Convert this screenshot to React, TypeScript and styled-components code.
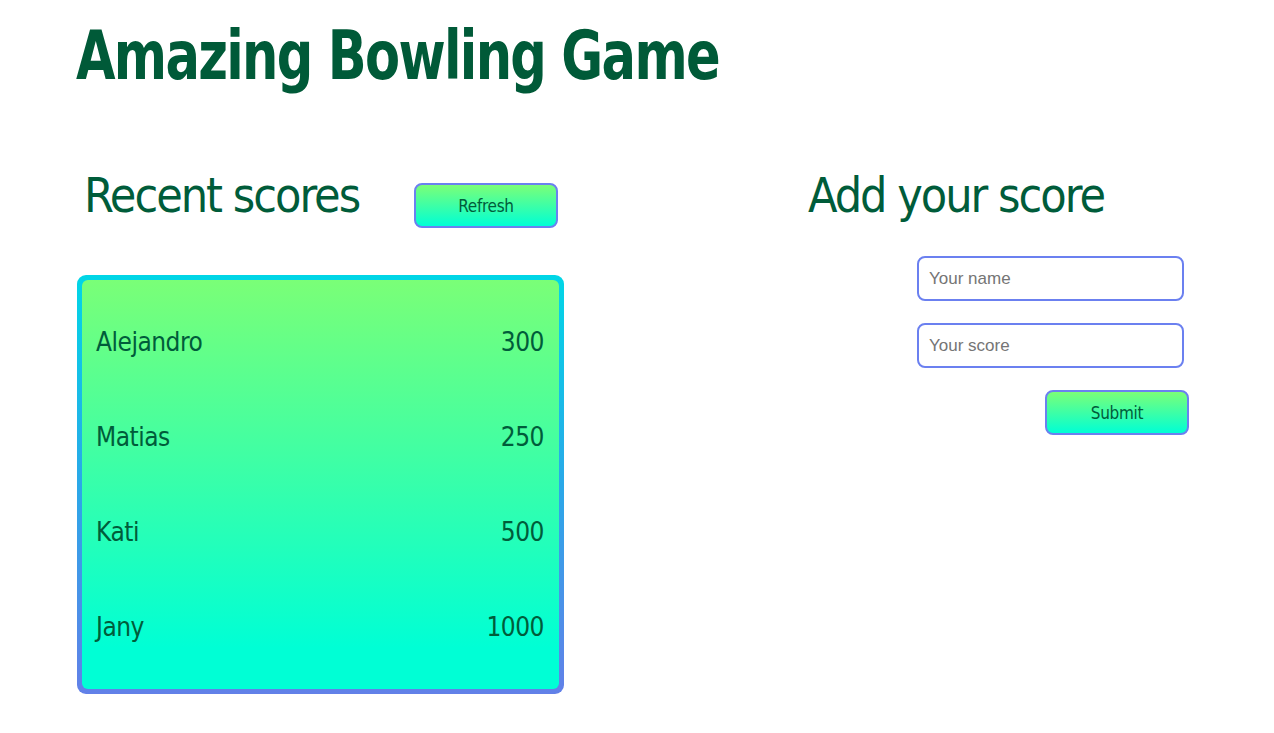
import React from "react";
import styled, { createGlobalStyle } from "styled-components";

const Global = createGlobalStyle`
  html, body { margin: 0; padding: 0; background: #ffffff; }
  body { font-family: "Liberation Sans", Arial, sans-serif; color: #005c3a; }
  * { box-sizing: border-box; }
`;

const Page = styled.div`
  display: flex;
  flex-direction: column;
  width: 1274px;
`;

const Title = styled.h1`
  margin: 22px 0 0 76px;
  font-family: "DejaVu Sans Condensed", "Liberation Sans", sans-serif;
  font-weight: 700;
  font-size: 68px;
  line-height: 1;
  letter-spacing: -2px;
  color: #005a38;
  transform: scaleX(0.835);
  transform-origin: left center;
  white-space: nowrap;
`;

const Main = styled.main`
  display: flex;
  justify-content: space-between;
  align-items: flex-start;
  padding: 0 85px 0 77px;
  margin-top: 81px;
`;

const LeftPanel = styled.section`
  display: flex;
  flex-direction: column;
  width: 487px;
`;

const RightPanel = styled.section`
  display: flex;
  flex-direction: column;
  width: 381px;
`;

const HeadingRow = styled.div`
  display: flex;
  align-items: flex-start;
  justify-content: space-between;
  padding: 0 6px 0 7px;
`;

const Heading = styled.h2`
  margin: 0;
  font-family: "DejaVu Sans Condensed", "Liberation Sans", sans-serif;
  font-weight: 400;
  font-size: 48px;
  line-height: 1;
  color: #005c3a;
  letter-spacing: -2px;
  white-space: nowrap;
`;

const GradientButton = styled.button<{ $top: number }>`
  margin-top: ${(p) => p.$top}px;
  width: 144px;
  height: 45px;
  border: 2px solid #6b80f0;
  border-radius: 8px;
  background: linear-gradient(180deg, #7bff77 0%, #00ffd5 100%);
  font-family: "DejaVu Sans Condensed", "Liberation Sans", sans-serif;
  font-size: 17px;
  letter-spacing: -0.3px;
  color: #005c3a;
  cursor: pointer;
  padding: 0;
`;

const Card = styled.div`
  margin-top: 47px;
  padding: 5px;
  border-radius: 9px;
  background: linear-gradient(180deg, #00d6e6 0%, #2aa8e8 50%, #6280e8 100%);
`;

const CardInner = styled.ul`
  margin: 0;
  list-style: none;
  height: 409px;
  padding: 14px 15px 15px 14px;
  border-radius: 6px;
  background: linear-gradient(180deg, #7aff77 0%, #00ffd5 90%);
  display: flex;
  flex-direction: column;
`;

const ScoreRow = styled.li`
  height: 95px;
  display: flex;
  align-items: center;
  justify-content: space-between;
  font-family: "DejaVu Sans Condensed", "Liberation Sans", sans-serif;
  font-size: 26px;
  letter-spacing: -0.5px;
  color: #005c3a;
`;

const Form = styled.form`
  display: flex;
  flex-direction: column;
  align-items: flex-end;
  gap: 22px;
  margin-top: 37px;
`;

const Input = styled.input`
  width: 267px;
  height: 45px;
  margin-right: 5px;
  border: 2px solid #6b80f0;
  border-radius: 8px;
  padding: 0 10px;
  font-family: "Liberation Sans", Arial, sans-serif;
  font-size: 17px;
  color: #333;
  outline: none;
  &::placeholder { color: #757575; }
`;

const scores = [
  { name: "Alejandro", score: 300 },
  { name: "Matias", score: 250 },
  { name: "Kati", score: 500 },
  { name: "Jany", score: 1000 },
];

export default function App() {
  return (
    <Page>
      <Global />
      <Title>Amazing Bowling Game</Title>
      <Main>
        <LeftPanel>
          <HeadingRow>
            <Heading>Recent scores</Heading>
            <GradientButton $top={12} type="button">Refresh</GradientButton>
          </HeadingRow>
          <Card>
            <CardInner>
              {scores.map((s) => (
                <ScoreRow key={s.name}>
                  <span>{s.name}</span>
                  <span>{s.score}</span>
                </ScoreRow>
              ))}
            </CardInner>
          </Card>
        </LeftPanel>
        <RightPanel>
          <Heading>Add your score</Heading>
          <Form onSubmit={(e) => e.preventDefault()}>
            <Input placeholder="Your name" />
            <Input placeholder="Your score" />
            <GradientButton $top={0} type="submit">Submit</GradientButton>
          </Form>
        </RightPanel>
      </Main>
    </Page>
  );
}
